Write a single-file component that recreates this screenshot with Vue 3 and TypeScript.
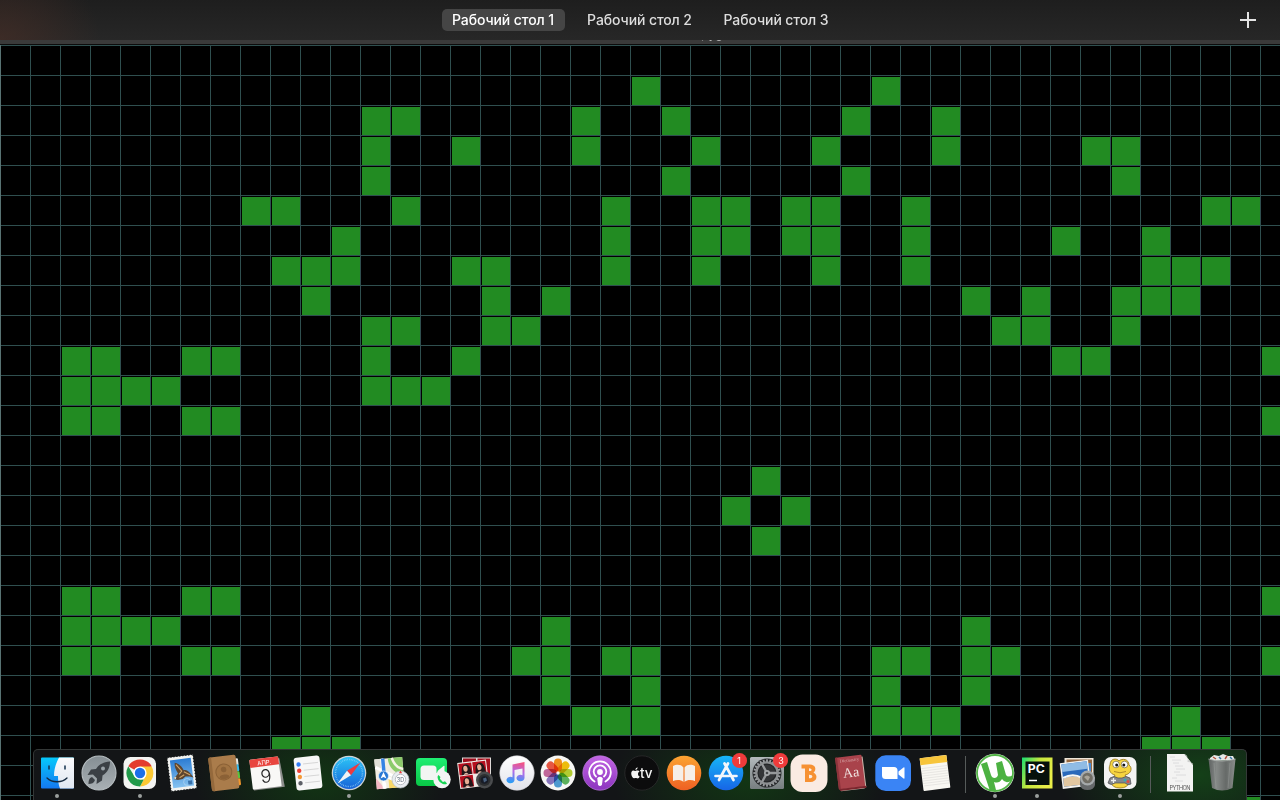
<script setup lang="ts">
import { computed } from 'vue'

const desktops = ['Рабочий стол 1', 'Рабочий стол 2', 'Рабочий стол 3']
const active = 0

const CELL = 30

// Live cells of the board: row index -> columns
const board: Record<number, number[]> = {
  1: [21, 29],
  2: [12, 13, 19, 22, 28, 31],
  3: [12, 15, 19, 23, 27, 31, 36, 37],
  4: [12, 22, 28, 37],
  5: [8, 9, 13, 20, 23, 24, 26, 27, 30, 40, 41],
  6: [11, 20, 23, 24, 26, 27, 30, 35, 38],
  7: [9, 10, 11, 15, 16, 20, 23, 27, 30, 38, 39, 40],
  8: [10, 16, 18, 32, 34, 37, 38, 39],
  9: [12, 13, 16, 17, 33, 34, 37],
  10: [2, 3, 6, 7, 12, 15, 35, 36, 42],
  11: [2, 3, 4, 5, 12, 13, 14],
  12: [2, 3, 6, 7, 42],
  14: [25],
  15: [24, 26],
  16: [25],
  18: [2, 3, 6, 7, 42],
  19: [2, 3, 4, 5, 18, 32],
  20: [2, 3, 6, 7, 17, 18, 20, 21, 29, 30, 32, 33, 42],
  21: [18, 21, 29, 32],
  22: [10, 19, 20, 21, 29, 30, 31, 39],
  23: [9, 10, 11, 38, 39, 40],
  25: [41],
}

const cells = computed(() =>
  Object.entries(board).flatMap(([row, cols]) =>
    cols.map((c) => ({ x: c * CELL + 2, y: Number(row) * CELL + 2 })),
  ),
)

const columns = Array.from({ length: 43 }, (_, i) => i * CELL)
const rows = Array.from({ length: 26 }, (_, i) => i * CELL)

const petals = ['#f7941e', '#f4c20d', '#b7d334', '#5fb760', '#4f9fd8', '#8a78c4', '#c86aa0', '#ef5a45']
const teeth = Array.from({ length: 24 }, (_, i) => i * 15)
const reminderColors = ['#2f7cf6', '#ee4036', '#f59a37', '#5c5f66']
const noteLines = [-6, -3.5, -1, 1.5, 4, 6.5, 9, 11.5]
const stampX = [-12, -9, -6, -3, 0, 3, 6, 9, 12]
const stampY = [-16, -13, -10, -7, -4, -1, 2, 5, 8, 11, 14, 16]
</script>

<template>
  <div class="screen">
    <header class="spaces">
      <nav class="tabs">
        <span v-for="(d, i) in desktops" :key="d" class="tab" :class="{ active: i === active }">{{ d }}</span>
      </nav>
      <svg class="add" width="16" height="16" viewBox="0 0 16 16"><path d="M7 0h2v16H7zM0 7h16v2H0z" fill="#e4e4e4" /></svg>
    </header>
    <div class="titlebar"><span class="title">pyg</span></div>
    <svg class="board" width="1280" height="755" viewBox="0 0 1280 755" shape-rendering="crispEdges">
      <rect v-for="x in columns" :key="'c' + x" :x="x" y="0" width="1" height="755" fill="#2f4f4f" />
      <rect v-for="y in rows" :key="'r' + y" x="0" :y="y" width="1280" height="1" fill="#2f4f4f" />
      <rect x="0" y="0" width="1" height="755" fill="#587373" />
      <rect v-for="c in cells" :key="c.x + '-' + c.y" :x="c.x" :y="c.y" width="28" height="28" fill="#228b22" />
    </svg>

    <footer class="dock">
      <!-- Finder -->
      <div class="slot running">
        <svg viewBox="-21 -24 42 50">
          <defs>
            <linearGradient id="fi" x1="0" y1="0" x2="0" y2="1"><stop offset="0" stop-color="#06c8fb" /><stop offset="1" stop-color="#1478f0" /></linearGradient>
            <linearGradient id="fw" x1="0" y1="0" x2="0" y2="1"><stop offset="0" stop-color="#fbfbfd" /><stop offset="1" stop-color="#dfe6f1" /></linearGradient>
          </defs>
          <rect x="-16" y="-15.5" width="33" height="31" rx="1" fill="url(#fi)" />
          <path d="M2-15.5H16a1 1 0 0 1 1 1V14.5a1 1 0 0 1-1 1H3C1.500 12 1 7 1 3H-3C-3-4-1-10 2-15.500Z" fill="url(#fw)" />
          <path d="M-8-7v3M8-7v3" stroke="#14324e" stroke-width="1.500" stroke-linecap="round" />
          <path d="M-10 5C-5 10 5 10 10 5" fill="none" stroke="#14283e" stroke-width="1.300" stroke-linecap="round" />
        </svg>
      </div>
      <!-- Launchpad -->
      <div class="slot">
        <svg viewBox="-21 -24 42 50">
          <defs><linearGradient id="la" x1="0" y1="0" x2="0" y2="1"><stop offset="0" stop-color="#858e93" /><stop offset="1" stop-color="#a9b0b4" /></linearGradient></defs>
          <circle r="17" fill="url(#la)" stroke="#b7bec1" stroke-width="1.100" />
          <path d="M11-11.500C5-11 0-9 -3-4L-8-3.500-11.500 2-6 1.500-2 5.500-2.500 11 3 7.500 3.500 2.500C9-1 11-6 11-11.500Z" fill="#3b4045" />
          <path d="M-7 4C-10 5-10.500 8-10.500 11-7.500 11-5 10-4 7Z" fill="#3b4045" />
          <circle cx="4" cy="-4.500" r="2" fill="#9aa2a7" />
        </svg>
      </div>
      <!-- Chrome -->
      <div class="slot running">
        <svg viewBox="-21 -24 42 50">
          <rect x="-16.500" y="-16" width="32.500" height="32" rx="7" fill="#f4f4f2" />
          <path d="M0 0L-11.700-6.750A13.500 13.500 0 0 1 11.700-6.750Z" fill="#e33b2e" />
          <path d="M0-6.500H11.700A13.500 13.500 0 0 1 0 13.500L5.600 3.200Z" fill="#fcc934" />
          <path d="M-11.700-6.750L-5.600 3.200 0 6.500H3.800L0 13.500A13.500 13.500 0 0 1-11.700-6.750Z" fill="#229a4a" />
          <circle r="6.600" fill="#fff" /><circle r="5.200" fill="#1b6ee8" />
        </svg>
      </div>
      <!-- Mail stamp -->
      <div class="slot">
        <svg viewBox="-21 -24 42 50">
          <defs><linearGradient id="ma" x1="0" y1="0" x2="0" y2="1"><stop offset="0" stop-color="#2c7cd2" /><stop offset="1" stop-color="#86c2f0" /></linearGradient></defs>
          <g transform="rotate(-7)">
            <rect x="-13" y="-17" width="26" height="34" fill="#f3f3f0" />
            <circle v-for="x in stampX" :key="'t' + x" :cx="x" cy="-17.200" r=".8" fill="#15181a" />
            <circle v-for="x in stampX" :key="'b' + x" :cx="x" cy="17.200" r=".8" fill="#15181a" />
            <circle v-for="y in stampY" :key="'l' + y" cx="-13.200" :cy="y" r=".8" fill="#15181a" />
            <circle v-for="y in stampY" :key="'r' + y" cx="13.200" :cy="y" r=".8" fill="#15181a" />
            <rect x="-10.500" y="-14" width="21" height="28" fill="url(#ma)" />
            <path d="M-6-11C-2-10 1-6 2-2.500 4-3 6-2 8 1L11 6 7 4.500 3 4 0 6-5 6.500-9 5-6 2-4 0C-6-4-7-8-6-11Z" fill="#5d452f" />
            <path d="M-5-9L0-2-3 1M2-1L8 3M-3 4.500L2 2" fill="none" stroke="#d2a364" stroke-width="1.100" />
            <path d="M-9 4l3-1-1 2.500z" fill="#f3ead8" />
            <circle cx="4" cy="9.500" r="3.500" fill="none" stroke="#b9d8f2" stroke-width=".6" />
            <path d="M5 8.500h4v4H5z" fill="#376fa8" />
          </g>
        </svg>
      </div>
      <!-- Contacts -->
      <div class="slot">
        <svg viewBox="-21 -24 42 50">
          <g transform="rotate(-7)">
            <rect x="9" y="-13" width="6.500" height="7" rx="1" fill="#e8e8e4" />
            <rect x="9" y="-7" width="6.500" height="7" rx="1" fill="#3bb9e8" />
            <rect x="9" y="0" width="6.500" height="7" rx="1" fill="#59c63c" />
            <rect x="9" y="7" width="6.500" height="7" rx="1" fill="#f5992c" />
            <rect x="-14" y="-17" width="27.500" height="34" rx="2" fill="#aa7c4b" />
            <path d="M-14-15a2 2 0 0 1 2-2h1V17h-1a2 2 0 0 1-2-2z" fill="#94693c" />
            <circle cx="0" cy="-1" r="8" fill="#a27443" stroke="#8b6136" stroke-width="1" />
            <circle cx="0" cy="-3.500" r="2.800" fill="#8b6136" />
            <path d="M-5 4.200C-4.500.8 4.500.8 5 4.200 2.500 7-2.500 7-5 4.200Z" fill="#8b6136" />
          </g>
        </svg>
      </div>
      <!-- Calendar -->
      <div class="slot">
        <svg viewBox="-21 -24 42 50">
          <g transform="rotate(-7)">
            <path d="M-14-13h29l2 29h-31z" fill="#8c8e8c" />
            <rect x="-15" y="-15" width="29" height="30" rx="1" fill="#f8f8f6" />
            <path d="M-15-14a1 1 0 0 1 1-1H13a1 1 0 0 1 1 1v7H-15z" fill="#e8453f" />
            <text x="-.5" y="-8.500" text-anchor="middle" font-size="6" fill="#fff">АПР.</text>
            <text x="-.5" y="9.500" text-anchor="middle" font-size="18.500" font-weight="300" fill="#252525">9</text>
          </g>
        </svg>
      </div>
      <!-- Reminders -->
      <div class="slot">
        <svg viewBox="-21 -24 42 50">
          <g transform="rotate(-6)">
            <rect x="-13" y="-16.500" width="26" height="33" rx="3" fill="#f7f7f7" />
            <g v-for="(c, i) in reminderColors" :key="c">
              <circle cx="-8.500" :cy="-9.500 + i * 6.300" r="2.200" :fill="c" />
              <path :d="`M-4 ${-9.500 + i * 6.300}H11`" stroke="#cfcfcf" stroke-width=".8" />
            </g>
          </g>
        </svg>
      </div>
      <!-- Safari -->
      <div class="slot running">
        <svg viewBox="-21 -24 42 50">
          <defs><linearGradient id="sa" x1="0" y1="0" x2="0" y2="1"><stop offset="0" stop-color="#2bc3f6" /><stop offset="1" stop-color="#1763d8" /></linearGradient></defs>
          <circle r="17.300" fill="#cdd3d6" /><circle r="16" fill="url(#sa)" />
          <circle r="13.500" fill="none" stroke="#8fd2f6" stroke-width="1.500" stroke-dasharray=".6 1.160" />
          <path d="M11.500-10.500L2 2.200-2-2.200Z" fill="#ee3a3f" /><path d="M-11.500 10.500L-2-2.200 2 2.200Z" fill="#f1f3f4" />
        </svg>
      </div>
      <!-- Maps -->
      <div class="slot">
        <svg viewBox="-21 -24 42 50">
          <g transform="rotate(-5)">
            <rect x="-15.500" y="-15" width="28" height="30" fill="#f2eee0" />
            <path d="M-15.500-15h9v11h-9z" fill="#e0e0d8" />
            <path d="M-2-15h14.500V2C6 2-2-4-2-15z" fill="#8ccb6a" />
            <path d="M2-15C4-7 8-4 12.500-3" fill="none" stroke="#f7f4e6" stroke-width="2.500" />
            <path d="M-15.500 4l8 11h-8z" fill="#f3b8c4" /><path d="M-3 6h12v9H-3z" fill="#f8d868" />
            <path d="M-15-7L12 9M-8 15v-30" stroke="#fff" stroke-width="3" /><path d="M-7 2V-15" stroke="#3583e4" stroke-width="3.500" />
            <path d="M-7 9V15M-7 2L12 13" stroke="#fff" stroke-width="2.500" />
          </g>
          <circle cx="-7.500" cy="3" r="5" fill="#2878d4" stroke="#e8f0f8" stroke-width=".7" />
          <path d="M-7.500-1l3 6.500-3-1.500-3 1.500z" fill="#fff" />
          <circle cx="9.500" cy="6.500" r="8.500" fill="#e9edf0" stroke="#b5bdc2" stroke-width=".7" />
          <circle cx="9.500" cy="6.500" r="5.200" fill="#fff" stroke="#a0a8ad" stroke-width=".7" />
          <text x="9.500" y="8.500" text-anchor="middle" font-size="5.500" fill="#526170">3D</text>
          <path d="M9.500-2.500l1.600 2.700H7.900z" fill="#e43c38" />
        </svg>
      </div>
      <!-- FaceTime -->
      <div class="slot">
        <svg viewBox="-21 -24 42 50">
          <defs><linearGradient id="fa" x1="0" y1="0" x2="0" y2="1"><stop offset="0" stop-color="#1fee73" /><stop offset="1" stop-color="#09c746" /></linearGradient></defs>
          <rect x="-17" y="-15" width="31" height="28" rx="4" fill="url(#fa)" />
          <rect x="-12.500" y="-7.500" width="16" height="14.500" rx="3.500" fill="#f2f5f3" />
          <path d="M4.500-2l6-5q1-.5 1 .5V7h-7z" fill="#f2f5f3" />
          <circle cx="9" cy="6.500" r="8.700" fill="#f3f4f4" />
          <path d="M5.500 2C3.500 3.500 5 7.500 7.500 9.500S13 12 14 10.500L12 8.200 9.900 9 6.900 5.700 7.400 4z" fill="#17d454" />
        </svg>
      </div>
      <!-- Photo Booth -->
      <div class="slot">
        <svg viewBox="-21 -24 42 50">
          <rect x="-13" y="-15.500" width="29" height="20" fill="#dedad8" /><rect x="-12" y="-14.500" width="13" height="9" fill="#9e0d1c" /><rect x="2.500" y="-14.500" width="12.500" height="17" fill="#a90f1d" />
          <g transform="rotate(-7)">
            <rect x="-16.500" y="-12" width="29" height="26" fill="#f0eae7" />
            <g v-for="p in [[-15.500, -11], [-1.500, -11], [-15.500, 1.500]]" :key="p.join()" :transform="`translate(${p[0]} ${p[1]})`">
              <rect width="13" height="11.500" fill="#b50e1e" />
              <path d="M2 11.500C3 8 2 1.500 7 1.500s4.500 6 5.500 10z" fill="#22171a" />
              <ellipse cx="6.500" cy="5.700" rx="2.200" ry="3" fill="#e7ac93" /><path d="M4 11.500q2.500-3.500 5 0z" fill="#e0b5a2" />
            </g>
          </g>
          <circle cx="9.500" cy="7" r="8.500" fill="#4a4c4e" /><circle cx="9.500" cy="7" r="6" fill="#2c2e30" /><circle cx="9.500" cy="7" r="3.800" fill="#171b26" /><path d="M8 5.500l3-1 1 3-3 2z" fill="#49607e" />
        </svg>
      </div>
      <!-- Music -->
      <div class="slot">
        <svg viewBox="-21 -24 42 50">
          <defs>
            <linearGradient id="mw" x1="0" y1="0" x2="0" y2="1"><stop offset="0" stop-color="#fff" /><stop offset="1" stop-color="#e2e3ea" /></linearGradient>
            <linearGradient id="mu" gradientUnits="userSpaceOnUse" x1="4" y1="-11" x2="0" y2="10"><stop offset="0" stop-color="#f8517a" /><stop offset=".5" stop-color="#b26be8" /><stop offset="1" stop-color="#2d9cf5" /></linearGradient>
          </defs>
          <circle r="17.200" fill="url(#mw)" stroke="#d5d5da" stroke-width=".6" />
          <path d="M-4.500-8.500L7.500-11V5A4 3.200 0 1 1 5.500 2.300V-4.500L-2.500-3V7A4 3.200 0 1 1-4.500 4.300Z" fill="url(#mu)" />
        </svg>
      </div>
      <!-- Photos -->
      <div class="slot">
        <svg viewBox="-21 -24 42 50">
          <circle r="17.400" fill="#f7f7f5" />
          <rect v-for="(c, i) in petals" :key="c" class="petal" x="-4" y="-14.500" width="8" height="13" rx="4" :fill="c" :transform="`rotate(${i * 45})`" />
        </svg>
      </div>
      <!-- Podcasts -->
      <div class="slot">
        <svg viewBox="-21 -24 42 50">
          <defs><linearGradient id="po" x1="0" y1="0" x2="0" y2="1"><stop offset="0" stop-color="#c365e4" /><stop offset="1" stop-color="#8c35bf" /></linearGradient></defs>
          <circle r="17.200" fill="url(#po)" stroke="#b878d8" stroke-width=".7" />
          <path d="M-5.500 8.500A10.800 10.800 0 1 1 5.500 8.500M-4 3.500A6.300 6.300 0 1 1 4 3.500" fill="none" stroke="#fff" stroke-width="1.800" stroke-linecap="round" />
          <circle cy="-1" r="2.900" fill="#fff" /><path d="M-2.800 5.200Q0 2.500 2.800 5.200L1.900 12Q0 14-1.900 12Z" fill="#fff" />
        </svg>
      </div>
      <!-- TV -->
      <div class="slot">
        <svg viewBox="-21 -24 42 50">
          <circle r="17.200" fill="#0c0c0d" stroke="#2c2c2d" stroke-width=".8" />
          <path d="M-6.500-2C-4.700-3-3-2.200-2.500-1.500-4.800 0-4.200 2.800-2.200 3.500-3 5-3.900 5.800-5 5.300-6 4.800-6.800 4.900-7.700 5.300-10 5.800-12.200-.8-9.500-2.200-8.300-2.800-7.500-1.800-6.500-2Z" fill="#f4f4f4" />
          <path d="M-6.700-2.700Q-6.700-5.200-4.300-5.800-4.300-3.200-6.700-2.700Z" fill="#f4f4f4" />
          <text x="-2" y="5" font-size="13.500" font-weight="500" fill="#f4f4f4">tv</text>
        </svg>
      </div>
      <!-- Books -->
      <div class="slot">
        <svg viewBox="-21 -24 42 50">
          <defs><linearGradient id="bo" x1="0" y1="0" x2="0" y2="1"><stop offset="0" stop-color="#fba432" /><stop offset="1" stop-color="#ef6023" /></linearGradient></defs>
          <circle r="17.300" fill="url(#bo)" />
          <path d="M-.6-5.500C-3-9-8-8.500-11-7V8C-7.500 6.500-3 6.500-.6 9ZM.6-5.500C3-9 8-8.500 11-7V8C7.500 6.500 3 6.500.6 9Z" fill="#f6efe8" />
        </svg>
      </div>
      <!-- App Store -->
      <div class="slot">
        <svg viewBox="-21 -24 42 50">
          <defs><linearGradient id="as" x1="0" y1="0" x2="0" y2="1"><stop offset="0" stop-color="#17b6f8" /><stop offset="1" stop-color="#1765e6" /></linearGradient></defs>
          <circle r="17.300" fill="url(#as)" />
          <path d="M-1.500-9.500L7.500 7M2-9.500L-7 7M-10.500 3H3M7 3h3.500" stroke="#f3f7fb" stroke-width="2.700" stroke-linecap="round" />
        </svg>
        <span class="badge">1</span>
      </div>
      <!-- System Preferences -->
      <div class="slot">
        <svg viewBox="-21 -24 42 50">
          <defs><linearGradient id="sp" x1="0" y1="0" x2="0" y2="1"><stop offset="0" stop-color="#b3babc" /><stop offset="1" stop-color="#777e80" /></linearGradient></defs>
          <rect x="-17" y="-16" width="34" height="32" rx="1.500" fill="url(#sp)" />
          <circle r="14.500" fill="#242628" />
          <rect v-for="t in teeth" :key="t" x="-.9" y="-13.700" width="1.800" height="3" fill="#9a9da0" :transform="`rotate(${t})`" />
          <circle r="10.700" fill="none" stroke="#8d9092" stroke-width="2.300" /><circle r="8.300" fill="#343638" />
          <path d="M0 0L10 0M0 0L-5-9M0 0L-5 9" stroke="#96999b" stroke-width="2.400" /><circle r="3" fill="#a6a9ab" /><circle r="1.300" fill="#45484a" />
        </svg>
        <span class="badge">3</span>
      </div>
      <!-- B -->
      <div class="slot">
        <svg viewBox="-21 -24 42 50">
          <rect x="-18.500" y="-18.500" width="37" height="37.500" rx="12" fill="#faebe2" />
          <path d="M-7.500-8.500H1C6.500-8.500 8-3 4.500-.5 9.500 2 8 9 1.500 9H-4V-4.500H-7.500ZM0-4.800V-1.900C3.500-1.600 3.500-4.800 0-4.800ZM0 1.700V5.300C4.500 5.700 4.500 1.300 0 1.700Z" fill="#f69132" fill-rule="evenodd" />
        </svg>
      </div>
      <!-- Dictionary -->
      <div class="slot">
        <svg viewBox="-21 -24 42 50">
          <g transform="rotate(-7)">
            <path d="M-12-15h25.500V15l-2 2h-23.500z" fill="#c9b5aa" />
            <rect x="-14" y="-17" width="26.500" height="32" rx="1" fill="#a9434b" /><path d="M-14-17h2v32h-2z" fill="#8c333b" />
            <path d="M-13 15.500h26.500" stroke="#7b252d" stroke-width="2" />
            <text class="serif" x="0" y="-11.500" text-anchor="middle" font-size="4.500" fill="#dcaeb0">Dictionary</text>
            <text class="serif" x="0" y="4" text-anchor="middle" font-size="14" fill="#eee1de">Aa</text>
          </g>
        </svg>
      </div>
      <!-- Zoom -->
      <div class="slot">
        <svg viewBox="-21 -24 42 50">
          <rect x="-17.700" y="-17.700" width="35.700" height="35.700" rx="10.500" fill="#3a84f5" />
          <path d="M-11-6H1A3.500 3.500 0 0 1 4.500-2.500V6H-7.500A3.500 3.500 0 0 1-11 2.500ZM5.500-1.500L10.500-5.500Q11.500-6 11.500-5V5Q11.500 6 10.500 5.500L5.500 1.500Z" fill="#fff" />
        </svg>
      </div>
      <!-- Notes -->
      <div class="slot">
        <svg viewBox="-21 -24 42 50">
          <g transform="rotate(-7)">
            <rect x="-13.500" y="-16.500" width="27" height="33" rx="1" fill="#f8f7f2" />
            <path d="M-13.500-16.500h27v7h-27z" fill="#f7c53b" />
            <path v-for="y in noteLines" :key="y" :d="`M-13 ${y}H13`" stroke="#dddcd8" stroke-width=".6" />
          </g>
        </svg>
      </div>
      <div class="divider"></div>
      <!-- uTorrent -->
      <div class="slot running">
        <svg viewBox="-21 -24 42 50">
          <circle r="19.300" fill="#f4f8f1" /><circle r="18" fill="#fff" stroke="#53b448" stroke-width="1.800" />
          <path d="M-14-9L-8-11-4 2C-3 6 2 6 3 2L1-10 7-12 11 2Q13 5 18 2L17 7Q11 12 7 6 4 11-1 9L1 17-5 18Z" fill="#4cb242" />
        </svg>
      </div>
      <!-- PyCharm -->
      <div class="slot running">
        <svg viewBox="-21 -24 42 50">
          <defs><linearGradient id="pc" x1="0" y1="0" x2="1" y2=".5"><stop offset="0" stop-color="#16dc72" /><stop offset=".5" stop-color="#c5e63d" /><stop offset="1" stop-color="#e9ee49" /></linearGradient></defs>
          <rect x="-15" y="-15.500" width="30.500" height="31" fill="url(#pc)" /><rect x="-11.500" y="-11.500" width="24" height="23.500" fill="#07110c" />
          <text x="-9.300" y="-.5" font-size="11.500" font-weight="700" fill="#fff" textLength="17" lengthAdjust="spacingAndGlyphs">PC</text>
          <path d="M-8 7.500H0" stroke="#fff" stroke-width="1.500" />
        </svg>
      </div>
      <!-- Preview -->
      <div class="slot">
        <svg viewBox="-21 -24 42 50">
          <rect x="-13.500" y="-15" width="29" height="24" fill="#efe6d9" /><rect x="-11.500" y="-13.500" width="25.500" height="20" fill="#976941" /><rect x="4" y="-10" width="9" height="10" fill="#4b8cd2" />
          <g transform="rotate(-7)">
            <rect x="-17" y="-12" width="28.500" height="26" fill="#f2f1ee" /><rect x="-15.500" y="-10.500" width="25.500" height="22.500" fill="#2a69ba" />
            <path d="M-15.500-10.500h25.500V-3L-15.500-3z" fill="#90bce5" /><path d="M-15.500 4Q-4 0 10 8V12H-15.500Z" fill="#e2c7a0" /><path d="M-15.500 3Q-5-1 3 5" fill="none" stroke="#f7f7f4" stroke-width="2" />
          </g>
          <path d="M2 4h15v8q-1 5-7.500 5T2 12z" fill="#66696b" /><circle cx="9.500" cy="5" r="7.500" fill="#a5a9ab" /><circle cx="9.500" cy="5" r="5.300" fill="#716e65" /><path d="M6 4q3-3 6 0l-2 4z" fill="#aaa59a" />
        </svg>
      </div>
      <!-- Pygame -->
      <div class="slot running">
        <svg viewBox="-21 -24 42 50">
          <rect x="-16" y="-16" width="32.500" height="32" rx="7" fill="#f4f4f3" />
          <path d="M-10-8C-10-15-3-15-1-12 2-15 9-14 9-8 13-5 11 1 5 2L9 9Q8 15 0 15-8 15-9 9L-5 2C-10 1-12-4-10-8Z" fill="#f6d43f" stroke="#8d701e" stroke-width=".8" />
          <circle cx="-4" cy="-8.500" r="3.300" fill="#fff" stroke="#544c32" stroke-width=".6" /><circle cx="4.500" cy="-8.500" r="3.300" fill="#fff" stroke="#544c32" stroke-width=".6" />
          <circle cx="-3.300" cy="-8" r="1.500" fill="#161616" /><circle cx="3.800" cy="-8" r="1.500" fill="#161616" />
          <path d="M-6-1.500Q0 1 6-1.500" fill="none" stroke="#9c7823" stroke-width=".8" />
          <path d="M-10 5Q-6 2-2 5H2Q6 2 10 5L11 11Q8 13 5 10H-5Q-9 13-12 10Z" fill="#84878c" stroke="#4c4e52" stroke-width=".7" />
          <path d="M-9 7.500h5M-6.500 5v5" stroke="#eee" stroke-width="1.300" /><circle cx="5" cy="7" r="1.500" fill="#38a9b4" /><circle cx="8" cy="8.500" r="1.500" fill="#df4b44" />
        </svg>
      </div>
      <div class="divider"></div>
      <!-- Python document -->
      <div class="slot">
        <svg viewBox="-21 -24 42 50">
          <path d="M-13-19H4.500L13-8V18.500H-13Z" fill="#f3f3f2" /><path d="M4.500-19q4 1 3 8 6 0 5.500 3L4.500-19z" fill="#cfd0cf" />
          <path d="M-10-16h5M-8-13h9M-7-10h6M-5-7h8M-4-4h9M-6-1h6M-4 2h10M-8 5h5M-5 8h8" stroke="#dadada" stroke-width=".9" />
          <text x="0" y="16.500" text-anchor="middle" font-size="5.600" fill="#555" textLength="21">PYTHON</text>
        </svg>
      </div>
      <!-- Trash -->
      <div class="slot">
        <svg viewBox="-21 -24 42 50">
          <defs><linearGradient id="tr"><stop offset="0" stop-color="#5e6261" /><stop offset=".3" stop-color="#858987" /><stop offset=".65" stop-color="#666a68" /><stop offset="1" stop-color="#8a8e8c" /></linearGradient></defs>
          <path d="M-12-15L-8-18-3-17 1-19 6-17 11-17 13-13-12-12Z" fill="#e6e8e7" />
          <path d="M-9-16l3 2M5-17l-2 3" stroke="#b6523f" stroke-width="1.400" /><path d="M-3-16l2 2M8-16l2 2" stroke="#3b78a6" stroke-width="1.500" />
          <path d="M-13.500-14Q0-10 13.500-14L10.500 15Q0 20-10 15Z" fill="url(#tr)" /><path d="M-13.500-14Q0-10 13.500-14" fill="none" stroke="#aeb2b0" stroke-width=".8" />
          <path d="M-8-10l2 25M8-10L6 15" stroke="#a6aaa8" stroke-width=".7" opacity=".5" />
        </svg>
      </div>
    </footer>
  </div>
</template>

<style>
body {
  margin: 0;
  background: #000;
}
</style>

<style scoped>
.screen {
  position: relative;
  width: 1280px;
  height: 800px;
  overflow: hidden;
  background: #000;
  font-family: Inter, Roboto, 'Liberation Sans', sans-serif;
}
.spaces {
  position: relative;
  box-sizing: border-box;
  height: 40px;
  display: flex;
  align-items: center;
  justify-content: flex-end;
  padding-right: 24px;
  background:
    radial-gradient(ellipse 100px 85px at 0 40px, rgba(72, 46, 38, 0.65), transparent),
    linear-gradient(#1e1e1e, #272727);
}
.tabs {
  position: absolute;
  left: 441.5px;
  top: 9px;
  display: flex;
  gap: 13.5px;
}
.tab {
  box-sizing: border-box;
  width: 123px;
  height: 22px;
  border-radius: 5px;
  text-align: center;
  white-space: nowrap;
  font-size: 14px;
  font-weight: 450;
  letter-spacing: -0.1px;
  line-height: 22px;
  color: #dedede;
}
.tab.active {
  background: #454545;
  color: #fff;
}
.add {
  display: block;
}
.titlebar {
  box-sizing: border-box;
  height: 5px;
  overflow: hidden;
  background: #3a3a3a;
  border-bottom: 1px solid #0c0c0c;
}
.title {
  display: block;
  margin: -14px 0 0 701px;
  font-size: 12.5px;
  line-height: 16px;
  color: #b5b5b5;
}
.board {
  display: block;
}
.dock {
  position: absolute;
  left: 33px;
  top: 749px;
  box-sizing: border-box;
  width: 1214px;
  height: 52px;
  padding-left: 1.9px;
  display: flex;
  border: 1px solid #343837;
  border-bottom: 0;
  border-radius: 5px 5px 0 0;
  background:
    radial-gradient(ellipse 125px 80px at 285px 30px, #123514, transparent),
    radial-gradient(ellipse 135px 80px at 715px 30px, #123614, transparent),
    radial-gradient(ellipse 140px 80px at 1165px 25px, #144018, transparent),
    #131517;
}
.slot {
  position: relative;
  flex: none;
  width: 41.8px;
  height: 50px;
}
.slot svg {
  display: block;
  width: 42px;
  height: 50px;
  margin-top: -1px;
  overflow: visible;
}
.slot.running::after {
  content: '';
  position: absolute;
  left: 19px;
  top: 44px;
  width: 4px;
  height: 4px;
  border-radius: 50%;
  background: #9b9f9d;
}
.badge {
  position: absolute;
  left: 27px;
  top: 3px;
  width: 15px;
  height: 15px;
  border-radius: 50%;
  background: #ee3b3b;
  color: #fff;
  font-size: 9px;
  line-height: 15px;
  text-align: center;
}
.divider {
  flex: none;
  width: 1px;
  height: 37px;
  margin: 6px 8.2px 0 9.2px;
  background: #565b5a;
}
.petal {
  mix-blend-mode: multiply;
}
.serif {
  font-family: 'Liberation Serif', serif;
}
</style>
